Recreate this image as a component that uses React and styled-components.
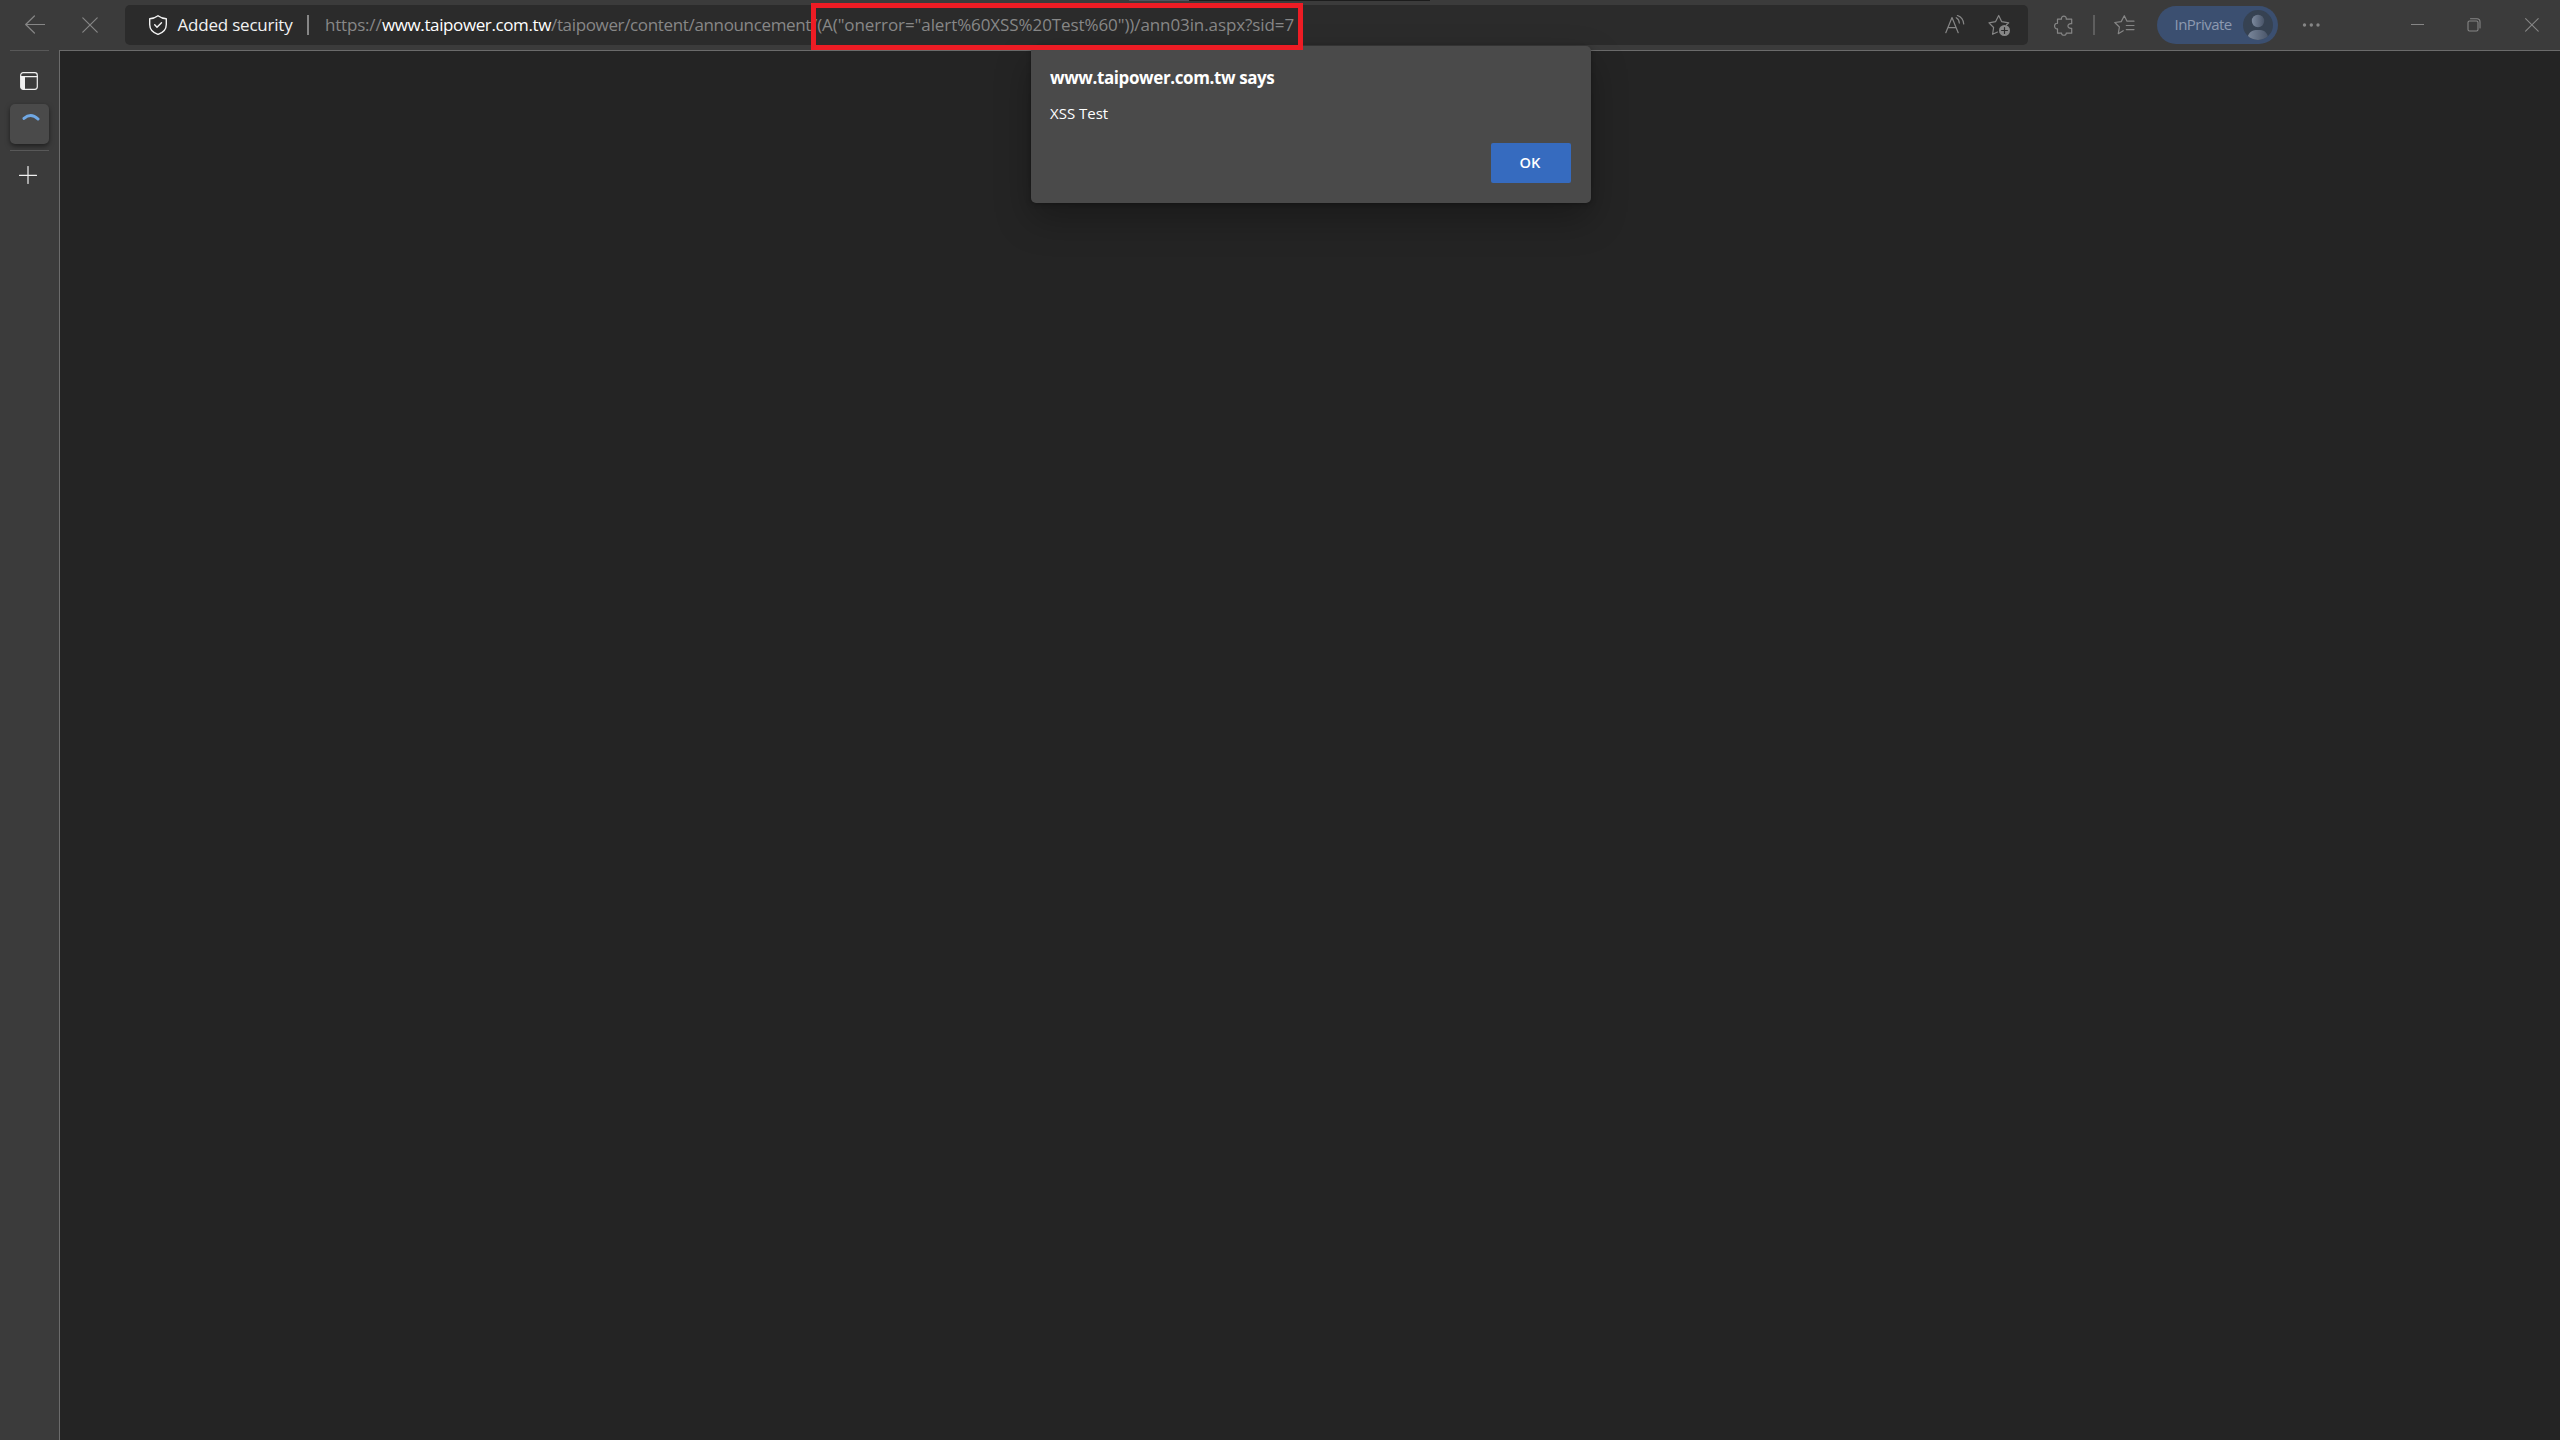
import React from 'react';
import styled, { createGlobalStyle } from 'styled-components';

const GlobalStyle = createGlobalStyle`
  html, body, #root { margin: 0; height: 100%; }
  body {
    overflow: hidden;
    background: #242424;
    font-family: "Open Sans", "Noto Sans", sans-serif;
    color: #fff;
  }
  * { box-sizing: border-box; }
`;

const Browser = styled.div`
  position: relative;
  display: flex;
  flex-direction: column;
  width: 2560px;
  height: 1440px;
  background: #3b3b3b;
`;

const Toolbar = styled.header`
  display: flex;
  align-items: center;
  height: 50px;
  flex: none;
  color: #868686;
`;

const Icon = styled.svg`
  display: block;
  flex: none;
  width: ${(p) => p.$w || 20}px;
  height: ${(p) => p.$h || p.$w || 20}px;
  margin-left: ${(p) => p.$gap || 0}px;
  fill: none;
  stroke: currentColor;
  stroke-width: ${(p) => p.$stroke || 1.2};
  stroke-linecap: round;
  stroke-linejoin: round;
`;

const AddressBar = styled.div`
  display: flex;
  align-items: center;
  width: 1903px;
  height: 40px;
  margin-left: 27px;
  padding: 0 17px 0 22px;
  border-radius: 5px;
  background: #2b2b2b;
`;

const SecurityChip = styled.div`
  display: flex;
  align-items: center;
  width: 160px;
  color: #f2f2f2;
`;

const SecurityLabel = styled.span`
  margin-left: 10px;
  padding-bottom: 2px;
  font-size: 17px;
  letter-spacing: -0.21px;
  white-space: nowrap;
`;

const Divider = styled.span`
  flex: none;
  width: 2px;
  height: 20px;
  margin-left: ${(p) => p.$gap || 0}px;
  background: ${(p) => p.$color};
`;

const Url = styled.div`
  display: flex;
  flex: 1;
  padding: 0 0 2px 16px;
  font-size: 17px;
  white-space: pre;
`;

const UrlPart = styled.span`
  flex: none;
  width: ${(p) => p.$w}px;
  letter-spacing: ${(p) => p.$track}px;
  color: ${(p) => (p.$host ? '#fff' : '#878787')};
`;

const PrivatePill = styled.div`
  display: flex;
  align-items: center;
  justify-content: space-between;
  width: 121px;
  height: 38px;
  margin-left: 22px;
  padding: 0 5px 0 18px;
  border-radius: 19px;
  background: #3b4f70;
  color: #8d9ab0;
`;

const PillLabel = styled.span`
  padding-bottom: 2px;
  font-size: 15px;
  letter-spacing: -0.52px;
`;

const Avatar = styled.svg`
  display: block;
  width: 30px;
  height: 30px;
`;

const Body = styled.div`
  display: flex;
  flex: 1;
`;

const Sidebar = styled.aside`
  display: flex;
  flex-direction: column;
  align-items: center;
  width: 59px;
  color: #f0f0f0;
`;

const Rule = styled.span`
  width: 39px;
  height: 1px;
  flex: none;
  background: #585858;
`;

const SideSlot = styled.div`
  display: flex;
  align-items: center;
  justify-content: center;
  width: 39px;
  height: ${(p) => p.$h}px;
  padding: ${(p) => p.$top || 0}px ${(p) => p.$shift || 0}px 0 0;
`;

const ActiveTab = styled.div`
  display: flex;
  justify-content: center;
  width: 39px;
  height: 40px;
  margin-bottom: 6px;
  padding: 9px 0 0 2px;
  border-radius: 5px;
  background: #4a4a4a;
  box-shadow: 0 2px 5px rgba(0, 0, 0, 0.5);
`;

const Page = styled.main`
  flex: 1;
  border-top: 1px solid #6b6b6b;
  border-left: 1px solid #6b6b6b;
  background: #242424;
`;

const TabStrip = styled.div`
  position: absolute;
  top: 0;
  left: 1129px;
  display: grid;
  grid-template-columns: 60px 241px;
  height: 1px;
`;

const StripSegment = styled.span`
  background: ${(p) => p.$color};
`;

const Dialog = styled.section`
  position: absolute;
  top: 46px;
  left: 1031px;
  display: flex;
  flex-direction: column;
  width: 560px;
  height: 157px;
  padding: 18px 20px 20px 19px;
  border-radius: 5px;
  background: #4a4a4a;
  box-shadow: 0 16px 36px rgba(0, 0, 0, 0.28), 0 1px 5px rgba(0, 0, 0, 0.3);
`;

const DialogTitle = styled.h1`
  margin: 0;
  font-size: 17px;
  font-weight: 700;
  line-height: 28px;
  letter-spacing: -0.39px;
`;

const DialogMessage = styled.p`
  margin: 9px 0 0;
  font-size: 15px;
  line-height: 24px;
`;

const OkButton = styled.button`
  align-self: flex-end;
  width: 80px;
  height: 40px;
  margin-top: auto;
  padding: 0 2px 2px 0;
  border: 0;
  border-radius: 2px;
  background: #366bbf;
  color: #fff;
  font: 600 14.6px "Open Sans", "Noto Sans", sans-serif;
`;

const Highlight = styled.div`
  position: absolute;
  top: 3px;
  left: 811px;
  width: 492px;
  height: 47px;
  border: 5px solid #ed1c24;
`;

const URL_PARTS = [
  { text: 'https://', w: 57, track: -0.19 },
  { text: 'www.taipower.com.tw', w: 169, track: -0.39, host: true },
  { text: '/taipower/content/announcement', w: 260, track: -0.35 },
  { text: '/(A("onerror="alert%60XSS%20Test%60"))/ann03in.aspx?sid=7', w: 483, track: -0.09 },
];

export default function App() {
  return (
    <>
      <GlobalStyle />
      <Browser>
        <Toolbar>
          <Icon $w={20} $gap={25}><path d="M19.5 9.5H.7M9.400 1 .7 9.500 9.400 18" /></Icon>
          <Icon $w={16} $gap={37}><path d="M.8.8l14.400 14.400M15.200.8.8 15.200" /></Icon>
          <AddressBar>
            <SecurityChip>
              <Icon $w={20} $gap={0.5} $stroke={1.4}>
                <path d="M10 .8C12.500 2.700 15.200 3.700 18.300 3.800V9.500C18.300 14 15.500 17.500 10 19.400 4.500 17.500 1.700 14 1.700 9.500V3.800C4.800 3.700 7.500 2.700 10 .8Z" />
                <path d="m6.700 9.800 2.300 2.500 4.500-4.600" />
              </Icon>
              <SecurityLabel>Added security</SecurityLabel>
            </SecurityChip>
            <Divider $color="#868686" />
            <Url>
              {URL_PARTS.map((part) => (
                <UrlPart key={part.text} $w={part.w} $track={part.track} $host={part.host}>
                  {part.text}
                </UrlPart>
              ))}
            </Url>
            <Icon $w={20}>
              <path d="M.8 17.700 7 2.500l6.200 15.200M2.900 12.700h8.200M11.200 2.700q3 1.600 3.100 5.400M12.400.5q5.800 2 6.300 8.400" />
            </Icon>
            <Icon $w={23} $h={22} $gap={23.5}>
              <path d="M9.500 18 4.600 20.300 5.600 13.500 1 8.800 7.500 7.700 10.700 1.500 13.700 7.700 20.700 8.900 18.400 11" />
              <circle cx="16.500" cy="16.500" r="5.500" fill="currentColor" stroke="none" />
              <path d="M16.500 13.600v5.800M13.600 16.500h5.800" stroke="#2b2b2b" />
            </Icon>
          </AddressBar>
          <Icon $w={20} $h={21} $gap={26}>
            <path d="M3.500 7.500V4.200H7.500C6.700 .2 13 .2 12.200 4.200H17.700V8.700C12.700 8 12.700 14 17.700 13.300V18.200H12.200C12.800 20.900 7 20.900 7.600 18.200H3.500V13.900C-.4 14.400-.4 7.700 3.500 8.300Z" />
          </Icon>
          <Divider $gap={19} $color="#5e5e5e" />
          <Icon $w={21} $h={20} $gap={18.5}>
            <path d="M9.200 15.700 4.300 18.700 5.400 12 .8 7.500 7.200 6.600 10.300.7 13 6.200H20M12.300 10.500H20M12.300 14.600H20" />
          </Icon>
          <PrivatePill>
            <PillLabel>InPrivate</PillLabel>
            <Avatar viewBox="0 0 30 30">
              <defs>
                <linearGradient id="person" x1="0" x2="1">
                  <stop offset="0" stopColor="#7c899d" />
                  <stop offset="1" stopColor="#485468" />
                </linearGradient>
                <clipPath id="disc"><circle cx="15" cy="15" r="15" /></clipPath>
              </defs>
              <circle cx="15" cy="15" r="15" fill="#364252" />
              <g clipPath="url(#disc)" fill="url(#person)">
                <circle cx="15" cy="11" r="6.200" />
                <path d="M4 30c.5-6.500 4.500-10 9-10h4c5 0 8 4 9 10Z" />
              </g>
            </Avatar>
          </PrivatePill>
          <Icon $w={18} $h={4} $gap={24}>
            <g fill="currentColor" stroke="none">
              <circle cx="2.500" cy="2" r="1.700" /><circle cx="9.300" cy="2" r="1.700" /><circle cx="16" cy="2" r="1.700" />
            </g>
          </Icon>
          <Icon $w={13} $h={3} $gap={91} $stroke={1}><path d="M0 .5h13" /></Icon>
          <Icon $w={14} $gap={43.5} $stroke={1.1}>
            <rect x="1" y="3" width="10" height="10" rx="1.500" />
            <path d="M3.500.8H10Q13 .8 13 4V10" />
          </Icon>
          <Icon $w={14} $gap={44} $stroke={1.1}><path d="m.6.6 12.600 12.600M13.200.6.6 13.200" /></Icon>
        </Toolbar>
        <Body>
          <Sidebar>
            <Rule />
            <SideSlot $h={53} $shift={1} $top={7}>
              <Icon $w={18} $h={18} $stroke={1.2}>
                <path d="M.7 4.800V15Q.7 17.300 3 17.300H5V4.800Z" fill="currentColor" stroke="none" />
                <rect x=".7" y=".7" width="16.600" height="16.600" rx="2.500" />
                <path d="M.7 4.700h16.600" />
              </Icon>
            </SideSlot>
            <ActiveTab>
              <Icon $w={18} $h={9} $stroke={3}>
                <path d="M2 5.400Q9 -.6 16 6" stroke="#70a8e4" />
              </Icon>
            </ActiveTab>
            <Rule />
            <SideSlot $h={48} $shift={3}>
              <Icon $w={18} $stroke={1.2}><path d="M.5 9.300h17M9 .5v17" /></Icon>
            </SideSlot>
          </Sidebar>
          <Page />
        </Body>
        <TabStrip>
          <StripSegment $color="#50545f" />
          <StripSegment $color="#1c1c1c" />
        </TabStrip>
        <Dialog role="dialog">
          <DialogTitle>www.taipower.com.tw says</DialogTitle>
          <DialogMessage>XSS Test</DialogMessage>
          <OkButton>OK</OkButton>
        </Dialog>
        <Highlight />
      </Browser>
    </>
  );
}
